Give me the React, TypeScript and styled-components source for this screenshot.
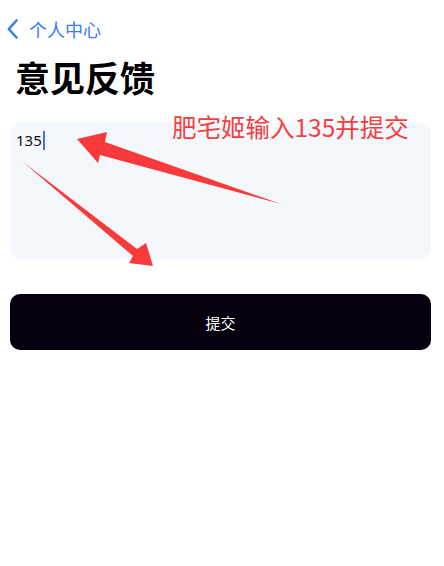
import React from 'react';
import styled, { createGlobalStyle } from 'styled-components';

const GlobalStyle = createGlobalStyle`
  html, body {
    margin: 0;
    padding: 0;
    background: #ffffff;
  }
  body {
    font-family: "Noto Sans", "Noto Sans CJK SC", sans-serif;
  }
`;

const Page = styled.div`
  position: relative;
  width: 444px;
  height: 566px;
  overflow: hidden;
  background: #ffffff;
`;

const NavBar = styled.div`
  display: flex;
  align-items: center;
  gap: 10px;
  height: 22px;
  padding: 18px 0 0 7px;
  color: #3a7cf4;
  font-size: 18px;
  line-height: 22px;
  font-weight: 400;
  font-family: "Noto Sans CJK SC", sans-serif;
`;

const Title = styled.h1`
  margin: 16px 0 0 15px;
  font-size: 35px;
  line-height: 42px;
  font-weight: 700;
  color: #000000;
  font-family: "Noto Sans CJK SC", sans-serif;
`;

const Body = styled.div`
  display: flex;
  flex-direction: column;
  padding: 25px 13px 0 10px;
`;

const InputBox = styled.div`
  height: 136px;
  border-radius: 10px;
  background: #f4f7fb;
  padding: 8px 6px;
  box-sizing: border-box;
  font-size: 15px;
  line-height: 18px;
  color: #111111;
  display: flex;
  align-items: flex-start;
`;

const Caret = styled.span`
  display: inline-block;
  width: 2px;
  height: 19px;
  margin-left: 1px;
  background: #4a6cf7;
`;

const SubmitButton = styled.button`
  margin-top: 35px;
  height: 56px;
  border: none;
  border-radius: 10px;
  background: #07000f;
  color: #ffffff;
  font-size: 15px;
  font-family: "Noto Sans CJK SC", sans-serif;
  cursor: pointer;
`;

const Note = styled.div`
  position: absolute;
  left: 172px;
  top: 112px;
  font-size: 24.5px;
  line-height: 29px;
  font-weight: 400;
  color: #f43f3f;
  font-family: "Noto Sans CJK SC", sans-serif;
  white-space: nowrap;
`;

const Overlay = styled.svg`
  position: absolute;
  left: 0;
  top: 0;
  pointer-events: none;
`;

export default function App() {
  return (
    <Page>
      <GlobalStyle />
      <NavBar>
        <svg width="12" height="20" viewBox="0 0 12 20">
          <path d="M9.5 1.5 L1.8 10 L9.5 18.5" fill="none" stroke="#3a7cf4" strokeWidth="2.6" strokeLinecap="round" strokeLinejoin="round" />
        </svg>
        <span>个人中心</span>
      </NavBar>
      <Title>意见反馈</Title>
      <Body>
        <InputBox>
          <span>135</span>
          <Caret />
        </InputBox>
        <SubmitButton>提交</SubmitButton>
      </Body>
      <Note>肥宅姬输入135并提交</Note>
      <Overlay width="444" height="566" viewBox="0 0 444 566">
        <polygon points="77,139 107,132 105,142 281,204 100,155 98,163" fill="#f83a3a" />
        <polygon points="23,162 137,249 146,243 153,266 129,263 133,256" fill="#f83a3a" />
      </Overlay>
    </Page>
  );
}
